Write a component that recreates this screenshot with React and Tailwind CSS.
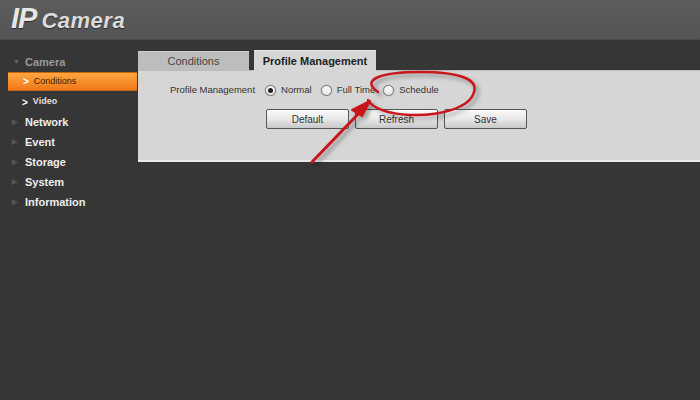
import React from 'react';

const menu = ['Network', 'Event', 'Storage', 'System', 'Information'];

function Radio({ checked }) {
    return (
        <span className="w-[11px] h-[11px] rounded-full border border-[#777] bg-gradient-to-b from-white to-[#e4e4e4] flex items-center justify-center shadow-[0_0_1px_rgba(0,0,0,0.4)]">
            {checked && <span className="w-[5px] h-[5px] rounded-full bg-[#222]" />}
        </span>
    );
}

function Btn({ children }) {
    return (
        <button className="w-[83px] h-[20px] border border-[#555] rounded-[2px] bg-gradient-to-b from-[#fafafa] via-[#e8e8e8] to-[#c8c8c8] text-[10px] text-[#333] shadow-[inset_0_1px_0_#fff]">
            {children}
        </button>
    );
}

export default function App() {
    return (
        <div className="relative w-[700px] h-[400px] bg-[#363636] overflow-hidden" style={{ fontFamily: '"Liberation Sans", Arial, sans-serif' }}>
            {/* Header */}
            <div className="h-[40px] bg-gradient-to-b from-[#5c5c5c] to-[#545454] border-b border-[#4a4a4a] flex items-end pl-[11px] pb-[6px]">
                <span className="italic font-bold text-[29px] leading-none text-[#e6e6e6] tracking-[-1px] [text-shadow:0_1px_1px_rgba(0,0,0,0.5)]">IP</span>
                <span className="italic font-bold text-[22px] leading-none text-[#dcdcdc] ml-[5px] mb-[1px] tracking-[0.5px] [text-shadow:0_1px_1px_rgba(0,0,0,0.5)]">Camera</span>
            </div>

            <div className="flex">
                {/* Sidebar */}
                <div className="w-[138px] pt-[13px] text-[11px] font-bold">
                    <div className="h-[19px] flex items-center pl-[13px] text-[#9a9a9a]">
                        <span className="text-[7px] text-[#666] mr-[5px]">▼</span>Camera
                    </div>
                    <div className="h-[19px] ml-[8px] mr-[1px] flex items-center pl-[15px] bg-gradient-to-b from-[#ffa640] to-[#f07818] text-[#3a1c00] font-normal text-[9px] border-y border-[#c9640f]">
                        <span className="text-[#fff] font-bold mr-[5px] text-[10px]">&gt;</span>Conditions
                    </div>
                    <div className="h-[20px] flex items-center pl-[22px] text-[#e0e0e0] text-[9px] mt-[1px]">
                        <span className="text-[#fff] mr-[5px] text-[10px]">&gt;</span>Video
                    </div>
                    {menu.map((m) => (
                        <div key={m} className="h-[20px] flex items-center pl-[12px] text-[#eeeeee]">
                            <span className="text-[7px] text-[#555] mr-[8px]">▶</span>{m}
                        </div>
                    ))}
                </div>

                {/* Content */}
                <div className="flex-1 pt-[10px]">
                    <div className="flex items-end h-[20px] text-[11px]">
                        <div className="w-[111px] h-[19px] bg-[#bdbdbd] border-t border-[#d0d0d0] flex items-center justify-center text-[#444]">Conditions</div>
                        <div className="w-[122px] h-[22px] ml-[5px] bg-[#d6d6d6] border-t border-[#e6e6e6] flex items-center justify-center font-bold text-[#222] -mb-[2px]">Profile Management</div>
                    </div>
                    <div className="h-[92px] bg-[#d6d6d6] border-t border-[#bcbcbc] border-b-2 border-b-[#eaeaea] pt-[12px]">
                        <div className="flex items-center text-[9.5px] text-[#333] h-[14px]">
                            <span className="ml-[32px] mr-[10px]">Profile Management</span>
                            <Radio checked />
                            <span className="ml-[5px] mr-[9px]">Normal</span>
                            <Radio />
                            <span className="ml-[5px] mr-[8px]">Full Time</span>
                            <Radio />
                            <span className="ml-[5px]">Schedule</span>
                        </div>
                        <div className="flex gap-[6px] ml-[128px] mt-[12px]">
                            <Btn>Default</Btn>
                            <Btn>Refresh</Btn>
                            <Btn>Save</Btn>
                        </div>
                    </div>
                </div>
            </div>

            {/* Red annotation */}
            <svg className="absolute left-0 top-0 pointer-events-none" width="700" height="400" viewBox="0 0 700 400">
                <defs>
                    <filter id="sh" x="-20%" y="-20%" width="140%" height="140%">
                        <feDropShadow dx="3" dy="3" stdDeviation="2" floodColor="#000" floodOpacity="0.35" />
                    </filter>
                </defs>
                <g filter="url(#sh)" fill="none" stroke="#c8141a" strokeLinecap="round">
                    <path d="M378 92 C 360 80, 380 72, 420 72 C 462 72, 478 80, 474 92 C 470 108, 440 116, 410 115 C 388 114, 372 108, 368 100" strokeWidth="2.5" />
                    <path d="M312 162 L 362 110" strokeWidth="3" />
                    <path d="M370 101 L 352 110 L 362 116 Z" fill="#c8141a" strokeWidth="2" strokeLinejoin="round" />
                </g>
            </svg>
        </div>
    );
}
